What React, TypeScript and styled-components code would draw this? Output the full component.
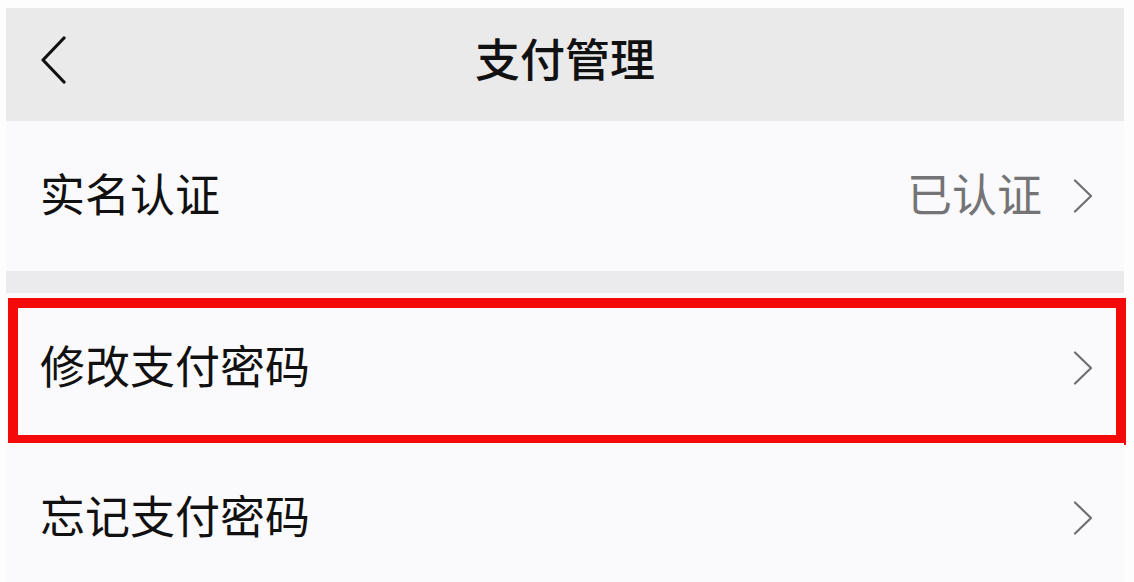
import * as React from 'react';
import styled, { createGlobalStyle, css } from 'styled-components';

const GlobalStyle = createGlobalStyle`
	html, body {
		margin: 0;
		padding: 0;
		background: #fdfdfe;
		overflow: hidden;
	}
	body {
		font-family: 'Noto Sans CJK SC', 'Noto Sans', sans-serif;
	}
`;

const Screen = styled.div`
	width: 1134px;
	height: 582px;
	padding: 8px 10px 0 6px;
	box-sizing: border-box;
	display: flex;
	flex-direction: column;
	overflow: hidden;
`;

const Header = styled.header`
	flex: 0 0 113px;
	box-sizing: border-box;
	display: grid;
	grid-template-columns: 1fr auto 1fr;
	align-items: center;
	padding: 0 34px 14px;
	background: #ebeaeb;
`;

const BackButton = styled.button`
	justify-self: start;
	display: flex;
	padding: 0;
	border: 0;
	background: none;
	cursor: pointer;
	margin-top: 4px;
`;

const Title = styled.h1`
	margin: 0;
	font-size: 45px;
	line-height: 1;
	font-weight: 500;
	color: #111;
`;

const Gap = styled.div`
	flex: 0 0 22px;
	background: #ebebed;
`;

const Row = styled.div<{ $highlight?: boolean }>`
	position: relative;
	flex: 0 0 150px;
	box-sizing: border-box;
	display: flex;
	align-items: center;
	padding: 0 31px 8px 34px;
	background: #fafafc;

	${(p) =>
		p.$highlight &&
		css`
			&::after {
				content: '';
				position: absolute;
				top: 5px;
				left: 2px;
				right: -2px;
				bottom: -2px;
				border: 10px solid #f50a0a;
				pointer-events: none;
			}
		`}
`;

const Label = styled.span`
	flex: 1;
	font-size: 45px;
	line-height: 1;
	color: #111;
`;

const Value = styled.span`
	font-size: 45px;
	line-height: 1;
	color: #747476;
	margin-right: 31px;
`;

const ChevronBox = styled.span`
	display: flex;
	margin-top: 8px;
`;

const Chevron = () => (
	<ChevronBox>
		<svg width="20" height="34" viewBox="0 0 20 34" fill="none">
			<path d="M2 1.5 L18 17 L2 32.5" stroke="#6e6e73" strokeWidth="2.2" strokeLinecap="round" strokeLinejoin="round" />
		</svg>
	</ChevronBox>
);

const BackIcon = () => (
	<svg width="26" height="48" viewBox="0 0 26 48" fill="none">
		<path d="M24 2 L3 24 L24 46" stroke="#111" strokeWidth="3.2" strokeLinecap="round" strokeLinejoin="round" />
	</svg>
);

interface IItem {
	label: string;
	value?: string;
	highlight?: boolean;
}

const App: React.FunctionComponent = () => {
	const first: IItem = { label: '实名认证', value: '已认证' };
	const rest: IItem[] = [
		{ label: '修改支付密码', highlight: true },
		{ label: '忘记支付密码' },
	];

	const renderRow = (item: IItem) => (
		<Row key={item.label} $highlight={item.highlight}>
			<Label>{item.label}</Label>
			{item.value && <Value>{item.value}</Value>}
			<Chevron />
		</Row>
	);

	return (
		<>
			<GlobalStyle />
			<Screen>
				<Header>
					<BackButton aria-label="返回">
						<BackIcon />
					</BackButton>
					<Title>支付管理</Title>
					<span />
				</Header>
				{renderRow(first)}
				<Gap />
				{rest.map(renderRow)}
			</Screen>
		</>
	);
};

export default App;
